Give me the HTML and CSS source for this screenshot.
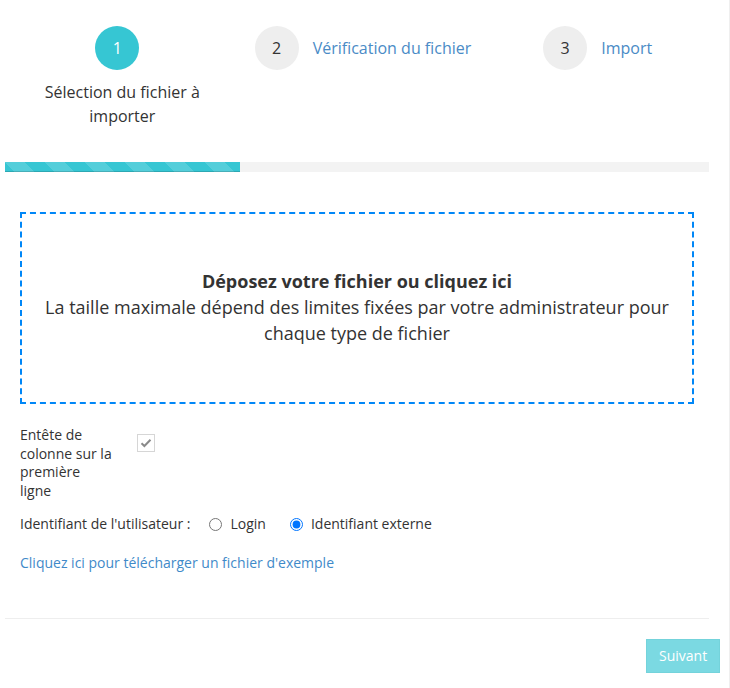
FILE: index.html
```html
<!DOCTYPE html>
<html lang="fr">
<head>
<meta charset="utf-8">
<title>Import</title>
<link rel="stylesheet" href="styles.css">
</head>
<body>
<div class="page">
  <div class="wizard">
    <div class="steps">
      <div class="step step-active">
        <div class="step-num num-active">1</div>
        <div class="step-title title-active">Sélection du fichier à importer</div>
      </div>
      <div class="step step-inline">
        <div class="step-num">2</div>
        <div class="step-title">Vérification du fichier</div>
      </div>
      <div class="step step-inline">
        <div class="step-num">3</div>
        <div class="step-title">Import</div>
      </div>
    </div>
    <div class="progress"><div class="progress-bar" style="width:33.3333%"></div></div>
    <div class="content">
      <div class="dropzone">
        <div class="dz-message">
          <strong>Déposez votre fichier ou cliquez ici</strong><br>
          La taille maximale dépend des limites fixées par votre administrateur pour chaque type de fichier
        </div>
      </div>
      <div class="opt-row">
        <div class="opt-label">Entête de colonne sur la première ligne</div>
        <span class="checkbox"><svg width="12" height="10" viewBox="0 0 12 10"><path d="M1.5 5.2 L4.4 8 L10.5 1.8" fill="none" stroke="#8a8a8a" stroke-width="2"/></svg></span>
      </div>
      <div class="radio-row">
        <span class="radio-label">Identifiant de l'utilisateur :</span>
        <label class="radio"><input type="radio" name="uid"><span>Login</span></label>
        <label class="radio"><input type="radio" name="uid" checked><span>Identifiant externe</span></label>
      </div>
      <a class="sample-link" href="#">Cliquez ici pour télécharger un fichier d'exemple</a>
    </div>
    <div class="separator"></div>
  </div>
  <div class="footer">
    <button class="btn-next" disabled>Suivant</button>
  </div>
</div>
</body>
</html>
```

FILE: styles.css
```css
html, body {
  margin: 0;
  padding: 0;
  background: #fff;
}
body {
  font-family: "Open Sans", "Liberation Sans", sans-serif;
  font-size: 14px;
  line-height: 20px;
  color: #333;
}
.page {
  width: 730px;
  min-height: 688px;
  box-sizing: border-box;
  border-right: 1px solid #efefef;
}
.wizard {
  margin-left: 5px;
  width: 704px;
}
.steps {
  display: grid;
  grid-template-columns: 1fr 1fr 1fr;
  padding-top: 26px;
}
.step {
  display: flex;
}
.step-active {
  flex-direction: column;
  align-items: center;
}
.step-inline {
  flex-direction: row;
  justify-content: center;
  align-items: flex-start;
  padding-left: 12px;
  gap: 14px;
}
.step-num {
  width: 44px;
  height: 44px;
  border-radius: 50%;
  background: #eeeeee;
  color: #333;
  font-size: 16px;
  line-height: 44px;
  text-align: center;
  flex: none;
}
.num-active {
  background: #36c6d3;
  color: #fff;
  margin-right: 10px;
}
.step-title {
  font-size: 16px;
  line-height: 44px;
  color: #4a8bc6;
  white-space: nowrap;
}
.title-active {
  color: #333;
  line-height: 24px;
  margin-top: 10px;
  width: 170px;
  text-align: center;
  white-space: normal;
}
.progress {
  margin-top: 34px;
  height: 10px;
  background: #f3f3f3;
  overflow: hidden;
}
.progress-bar {
  height: 100%;
  background-color: #36c6d3;
  background-image: linear-gradient(45deg, rgba(255,255,255,.15) 25%, transparent 25%, transparent 50%, rgba(255,255,255,.15) 50%, rgba(255,255,255,.15) 75%, transparent 75%, transparent);
  background-size: 40px 40px;
  box-shadow: inset 0 -1px 0 rgba(0,0,0,.15);
}
.content {
  padding: 40px 15px 45px;
}
.dropzone {
  height: 192px;
  box-sizing: border-box;
  border: 2px dashed #0087f7;
  display: flex;
  align-items: center;
  justify-content: center;
  text-align: center;
}
.dz-message {
  font-size: 18px;
  line-height: 1.42857;
  color: #333;
  padding: 0 20px;
}
.dz-message strong {
  font-weight: 700;
}
.opt-row {
  display: flex;
  align-items: flex-start;
  margin-top: 22px;
}
.opt-label {
  flex: none;
  width: 94px;
  line-height: 18.5px;
}
.checkbox {
  flex: none;
  margin-left: 23px;
  margin-top: 8px;
  width: 18px;
  height: 18px;
  box-sizing: border-box;
  border: 1px solid #d6d6d6;
  display: flex;
  align-items: center;
  justify-content: center;
}
.radio-row {
  display: flex;
  align-items: center;
  margin-top: 14px;
}
.radio-label {
  margin-right: 19px;
}
.radio {
  display: flex;
  align-items: center;
  margin-right: 24px;
}
.radio input {
  margin: 0 8px 0 0;
  width: 13px;
  height: 13px;
}
.sample-link {
  display: block;
  margin-top: 19px;
  color: #3f8ac9;
  text-decoration: none;
}
.separator {
  border-top: 1px solid #eeeeee;
}
.footer {
  display: flex;
  justify-content: flex-end;
  padding: 20px 9px 0 0;
}
.btn-next {
  font-family: "Open Sans", "Liberation Sans", sans-serif;
  font-size: 14px;
  line-height: 20px;
  padding: 6px 12px;
  width: 74px;
  height: 34px;
  color: #fff;
  background: #36c6d3;
  border: 1px solid #2bbcc9;
  border-radius: 0;
  opacity: .65;
}
```
